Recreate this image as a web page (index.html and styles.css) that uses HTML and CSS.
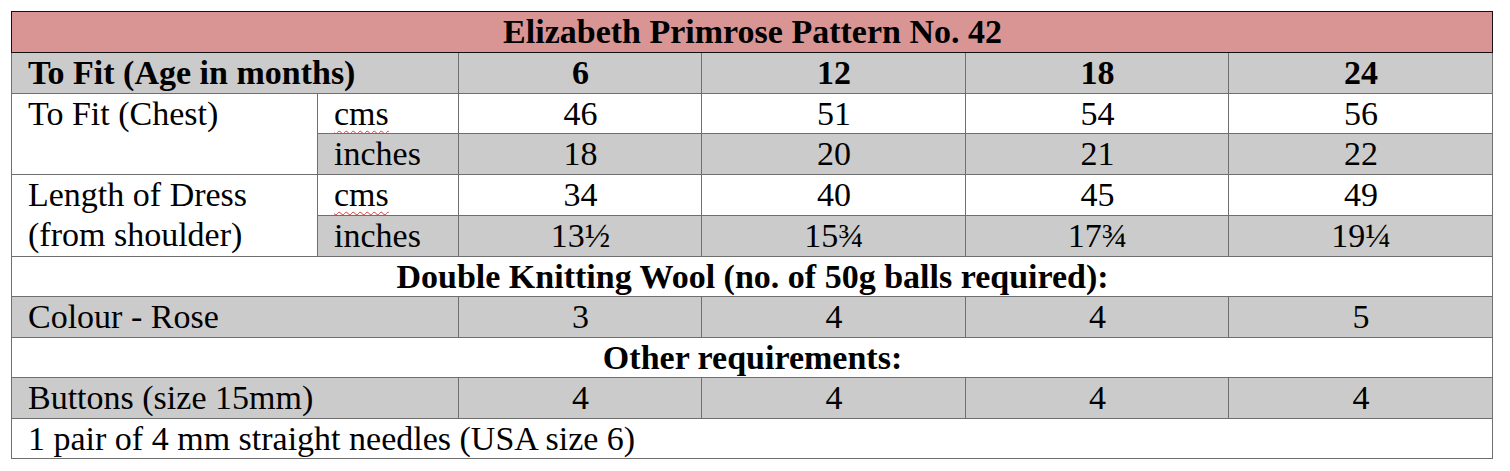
FILE: index.html
```html
<!DOCTYPE html>
<html lang="en">
<head>
<meta charset="utf-8">
<title>Elizabeth Primrose Pattern No. 42</title>
<link rel="stylesheet" href="styles.css">
</head>
<body>
<table class="pattern">
  <colgroup>
    <col class="c-label">
    <col class="c-unit">
    <col class="c-first">
    <col class="c-size">
    <col class="c-size2">
    <col class="c-size">
  </colgroup>
  <tr>
    <th class="title" colspan="6">Elizabeth Primrose Pattern No. 42</th>
  </tr>
  <tr class="grey">
    <th class="left" colspan="2">To Fit (Age in months)</th>
    <th>6</th><th>12</th><th>18</th><th>24</th>
  </tr>
  <tr>
    <td class="left label" rowspan="2">To Fit (Chest)</td>
    <td class="left"><span class="spell">cms</span></td>
    <td>46</td><td>51</td><td>54</td><td>56</td>
  </tr>
  <tr class="grey">
    <td class="left">inches</td>
    <td>18</td><td>20</td><td>21</td><td>22</td>
  </tr>
  <tr>
    <td class="left label two" rowspan="2">Length of Dress<br>(from shoulder)</td>
    <td class="left"><span class="spell">cms</span></td>
    <td>34</td><td>40</td><td>45</td><td>49</td>
  </tr>
  <tr class="grey">
    <td class="left">inches</td>
    <td>13½</td><td>15¾</td><td>17¾</td><td>19¼</td>
  </tr>
  <tr>
    <th colspan="6">Double Knitting Wool (no. of 50g balls required):</th>
  </tr>
  <tr class="grey">
    <td class="left" colspan="2">Colour - Rose</td>
    <td>3</td><td>4</td><td>4</td><td>5</td>
  </tr>
  <tr>
    <th colspan="6">Other requirements:</th>
  </tr>
  <tr class="grey">
    <td class="left" colspan="2">Buttons (size 15mm)</td>
    <td>4</td><td>4</td><td>4</td><td>4</td>
  </tr>
  <tr>
    <td class="left" colspan="6">1 pair of 4 mm straight needles (USA size 6)</td>
  </tr>
</table>
</body>
</html>
```

FILE: styles.css
```css
html, body {
  margin: 0;
  padding: 0;
  background: #ffffff;
}

body {
  padding: 11px 0 0 11px;
  font-family: "Liberation Serif", "Tinos", "Times New Roman", serif;
  color: #000;
}

.pattern {
  border-collapse: collapse;
  table-layout: fixed;
  width: 1482px;
  font-size: 34px;
}

.c-label { width: 306px; }
.c-unit { width: 141px; }
.c-first { width: 243px; }
.c-size { width: 264px; }
.c-size2 { width: 263px; }

.pattern td,
.pattern th {
  border: 1px solid #6f6f6f;
  padding: 1px 15px 0 16px;
  line-height: 38.5px;
  height: 38.5px;
  text-align: center;
  vertical-align: top;
  white-space: nowrap;
  overflow: hidden;
}

.pattern th {
  font-weight: bold;
}

.pattern .left {
  text-align: left;
}

.pattern .title {
  background: #d99594;
  border: 1px solid #111;
  height: 39px;
  padding-top: 1px;
}

.pattern tr.grey td,
.pattern tr.grey th {
  background: #cbcbcb;
}

.pattern td.label {
  background: #ffffff;
}

.pattern td.two {
  line-height: 40.5px;
  padding-top: 0;
}

.spell {
  text-decoration: underline wavy #d23b3b;
  text-decoration-thickness: 1px;
  text-underline-offset: 5px;
}
```
